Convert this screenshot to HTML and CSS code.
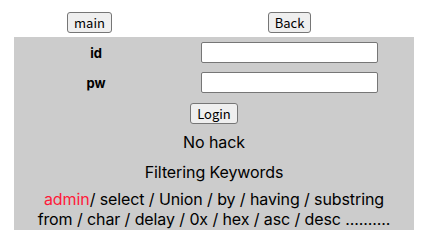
FILE: index.html
```html
<!DOCTYPE html>
<html lang="ko">
<head>
    <meta charset="UTF-8">
    <meta name="viewport" content="width=device-width, initial-scale=1.0">
    <title>Login</title>
    <link rel="stylesheet" href="styles.css">
</head>
<body>

<div class="page">
    <div class="nav">
        <button class="btn">main</button>
        <button class="btn">Back</button>
    </div>

    <div class="panel">
        <div class="row">
            <span class="label">id</span>
            <input type="text" class="field">
        </div>
        <div class="row">
            <span class="label">pw</span>
            <input type="password" class="field">
        </div>
        <div class="submit">
            <button class="btn">Login</button>
        </div>
        <p class="msg">No hack</p>
        <p class="msg title">Filtering Keywords</p>
        <p class="keywords"><span class="hit">admin</span>/ select / Union / by / having / substring<br>from / char / delay / 0x / hex / asc / desc ..........</p>
    </div>
</div>

</body>
</html>
```

FILE: styles.css
```css
body {
    margin: 0;
    padding: 0;
    background: #ffffff;
    font-family: Inter, "Noto Sans CJK KR", sans-serif;
    color: #000;
}

.page {
    width: 400px;
    padding: 12px 0 0 14px;
}

.nav {
    display: grid;
    grid-template-columns: 151px 249px;
    justify-items: center;
    align-items: start;
    height: 25px;
}

.btn {
    font-family: "Noto Sans CJK KR", "Noto Sans", sans-serif;
    font-size: 13px;
    line-height: 17px;
    height: 21px;
    padding: 1px 6px;
    border: 1px solid #767676;
    border-radius: 3px;
    background: #efefef;
    color: #000;
}

.panel {
    background: #cccccc;
    padding: 5px 0 1px;
    text-align: center;
}

.row {
    display: grid;
    grid-template-columns: 164px 236px;
    align-items: center;
    height: 21px;
    margin-bottom: 9px;
}

.label {
    font-size: 13px;
    font-weight: bold;
}

.field {
    box-sizing: border-box;
    width: 177px;
    height: 21px;
    margin: 0 0 0 23px;
    border: 1px solid #767676;
    border-radius: 2px;
    background: #fff;
}

.submit {
    margin-top: 10px;
    height: 21px;
}

.msg {
    margin: 8px 0 0;
    font-size: 16px;
    line-height: 20px;
    letter-spacing: -0.1px;
}

.title {
    margin-top: 10px;
}

.keywords {
    margin: 7px 0 0;
    font-size: 16px;
    line-height: 20px;
    letter-spacing: -0.1px;
}

.hit {
    color: #ff1a3a;
}
```
